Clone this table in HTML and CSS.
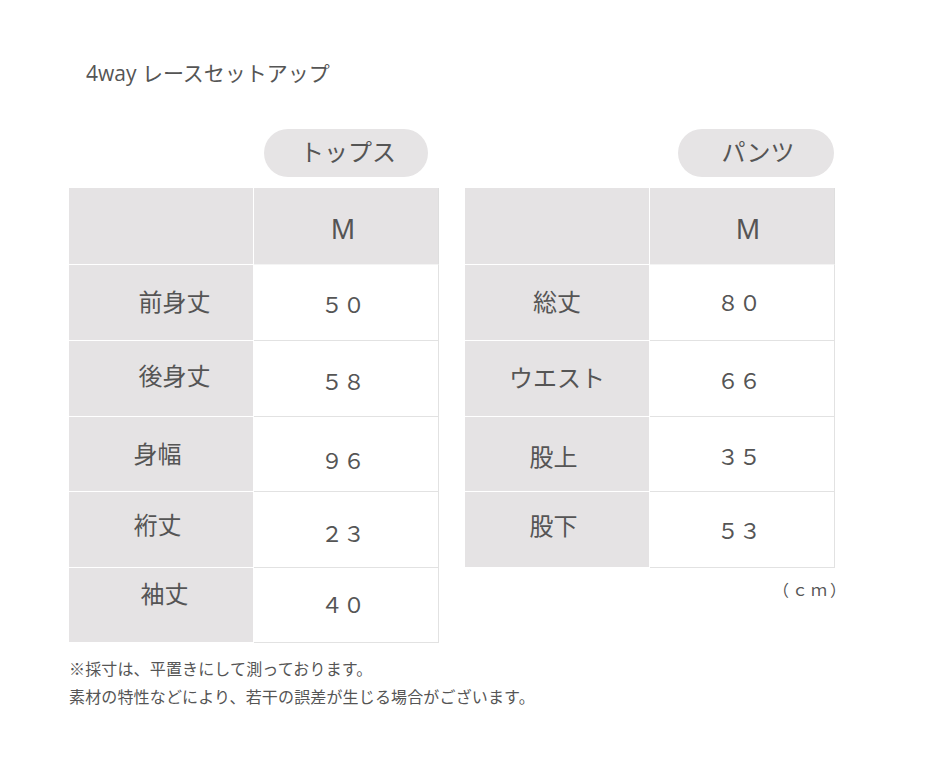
FILE: index.html
```html
<!DOCTYPE html>
<html lang="ja">
<head>
<meta charset="utf-8">
<title>4way レースセットアップ</title>
<link rel="stylesheet" href="styles.css">
</head>
<body>
<div class="page">
  <h1 class="title">4way レースセットアップ</h1>
  <div class="tables">
    <section class="sect">
      <div class="pill pill-tops">トップス</div>
      <div class="grid grid-tops">
        <div class="cell lbl"></div>
        <div class="cell val head head-tops">M</div>

        <div class="cell lbl shift-r pb3">前身丈</div>
        <div class="cell val pt4">５０</div>

        <div class="cell lbl shift-r pb8">後身丈</div>
        <div class="cell val pt6">５８</div>

        <div class="cell lbl shift-l pt2">身幅</div>
        <div class="cell val pt14">９６</div>

        <div class="cell lbl shift-l pb11">裄丈</div>
        <div class="cell val pt8">２３</div>

        <div class="cell lbl shift-s pb24">袖丈</div>
        <div class="cell val">４０</div>
      </div>
      <div class="notes">
        <p>※採寸は、平置きにして測っております。</p>
        <p>素材の特性などにより、若干の誤差が生じる場合がございます。</p>
      </div>
    </section>
    <section class="sect">
      <div class="pill pill-pants">パンツ</div>
      <div class="grid grid-pants">
        <div class="cell lbl"></div>
        <div class="cell val head head-pants">M</div>

        <div class="cell lbl">総丈</div>
        <div class="cell val">８０</div>

        <div class="cell lbl">ウエスト</div>
        <div class="cell val pt4">６６</div>

        <div class="cell lbl shift-l pt7">股上</div>
        <div class="cell val pt6">３５</div>

        <div class="cell lbl shift-l pb9">股下</div>
        <div class="cell val pt2">５３</div>
      </div>
      <div class="unit">（ｃｍ）</div>
    </section>
  </div>
</div>
</body>
</html>
```

FILE: styles.css
```css
html, body {
  margin: 0;
  padding: 0;
  background: #ffffff;
}

body {
  font-family: "Noto Sans CJK JP", "Noto Sans", sans-serif;
  color: #555555;
}

.page {
  padding: 56px 0 0 69px;
}

.title {
  margin: 0 0 0 17px;
  font-family: "Open Sans", "Noto Sans CJK JP", sans-serif;
  font-weight: 400;
  font-size: 21px;
  line-height: 34px;
  color: #555555;
}

.tables {
  display: flex;
  gap: 27px;
  margin-top: 39px;
}

.sect {
  display: flex;
  flex-direction: column;
  width: 369px;
}

.pill {
  height: 48px;
  border-radius: 24px;
  background: #e6e4e5;
  display: flex;
  align-items: center;
  justify-content: center;
  font-size: 24px;
  line-height: 1;
  color: #555555;
  margin-bottom: 11px;
  padding-left: 4px;
  padding-bottom: 4px;
  box-sizing: border-box;
}

.pill-tops {
  width: 164px;
  margin-left: 195px;
}

.pill-pants {
  width: 156px;
  margin-left: 213px;
}

.grid {
  display: grid;
  grid-template-columns: 184px 185px;
  column-gap: 1px;
  background: #ffffff;
}

.grid-tops {
  grid-template-rows: 77px 76px 76px 75px 76px 75px;
}

.grid-pants {
  grid-template-rows: 77px 76px 76px 75px 76px;
}

.cell {
  box-sizing: border-box;
  display: flex;
  align-items: center;
  justify-content: center;
  line-height: 1;
  padding-top: 0;
  padding-bottom: 4px;
}

.lbl {
  background: #e5e3e4;
  border-bottom: 1px solid #ffffff;
  font-size: 24px;
  color: #555555;
}

.val {
  background: #ffffff;
  border-right: 1px solid #e2e2e2;
  border-bottom: 1px solid #e2e2e2;
  font-size: 22px;
  color: #555555;
  padding-right: 6px;
}

.val.head {
  background: #e5e3e4;
  border-bottom: 1px solid #f4f4f4;
  border-right-color: #dedede;
  font-family: "Noto Sans", sans-serif;
  font-size: 27px;
  padding-top: 4px;
  padding-bottom: 0;
}

.head-tops {
  padding-right: 6px;
}

.head-pants {
  padding-right: 0;
  padding-left: 12px;
}

.shift-r { padding-left: 27px; }
.shift-l { padding-right: 7px; }
.shift-s { padding-left: 7px; }

.pt2 { padding-top: 2px; }
.pt4 { padding-top: 4px; }
.pt6 { padding-top: 6px; }
.pt7 { padding-top: 7px; }
.pt8 { padding-top: 8px; }
.pt14 { padding-top: 14px; }
.pb3 { padding-bottom: 3px; }
.pb8 { padding-bottom: 8px; }
.pb9 { padding-bottom: 9px; }
.pb11 { padding-bottom: 11px; }
.pb24 { padding-bottom: 24px; }

.unit {
  align-self: flex-end;
  margin-top: 10px;
  margin-right: -15px;
  font-size: 16px;
  line-height: 22px;
  letter-spacing: 3px;
  color: #555555;
}

.notes {
  margin-top: 11px;
  width: 520px;
}

.notes p {
  margin: 0;
  font-size: 16px;
  line-height: 28px;
  letter-spacing: 0.15px;
  color: #555555;
  white-space: nowrap;
}
```
